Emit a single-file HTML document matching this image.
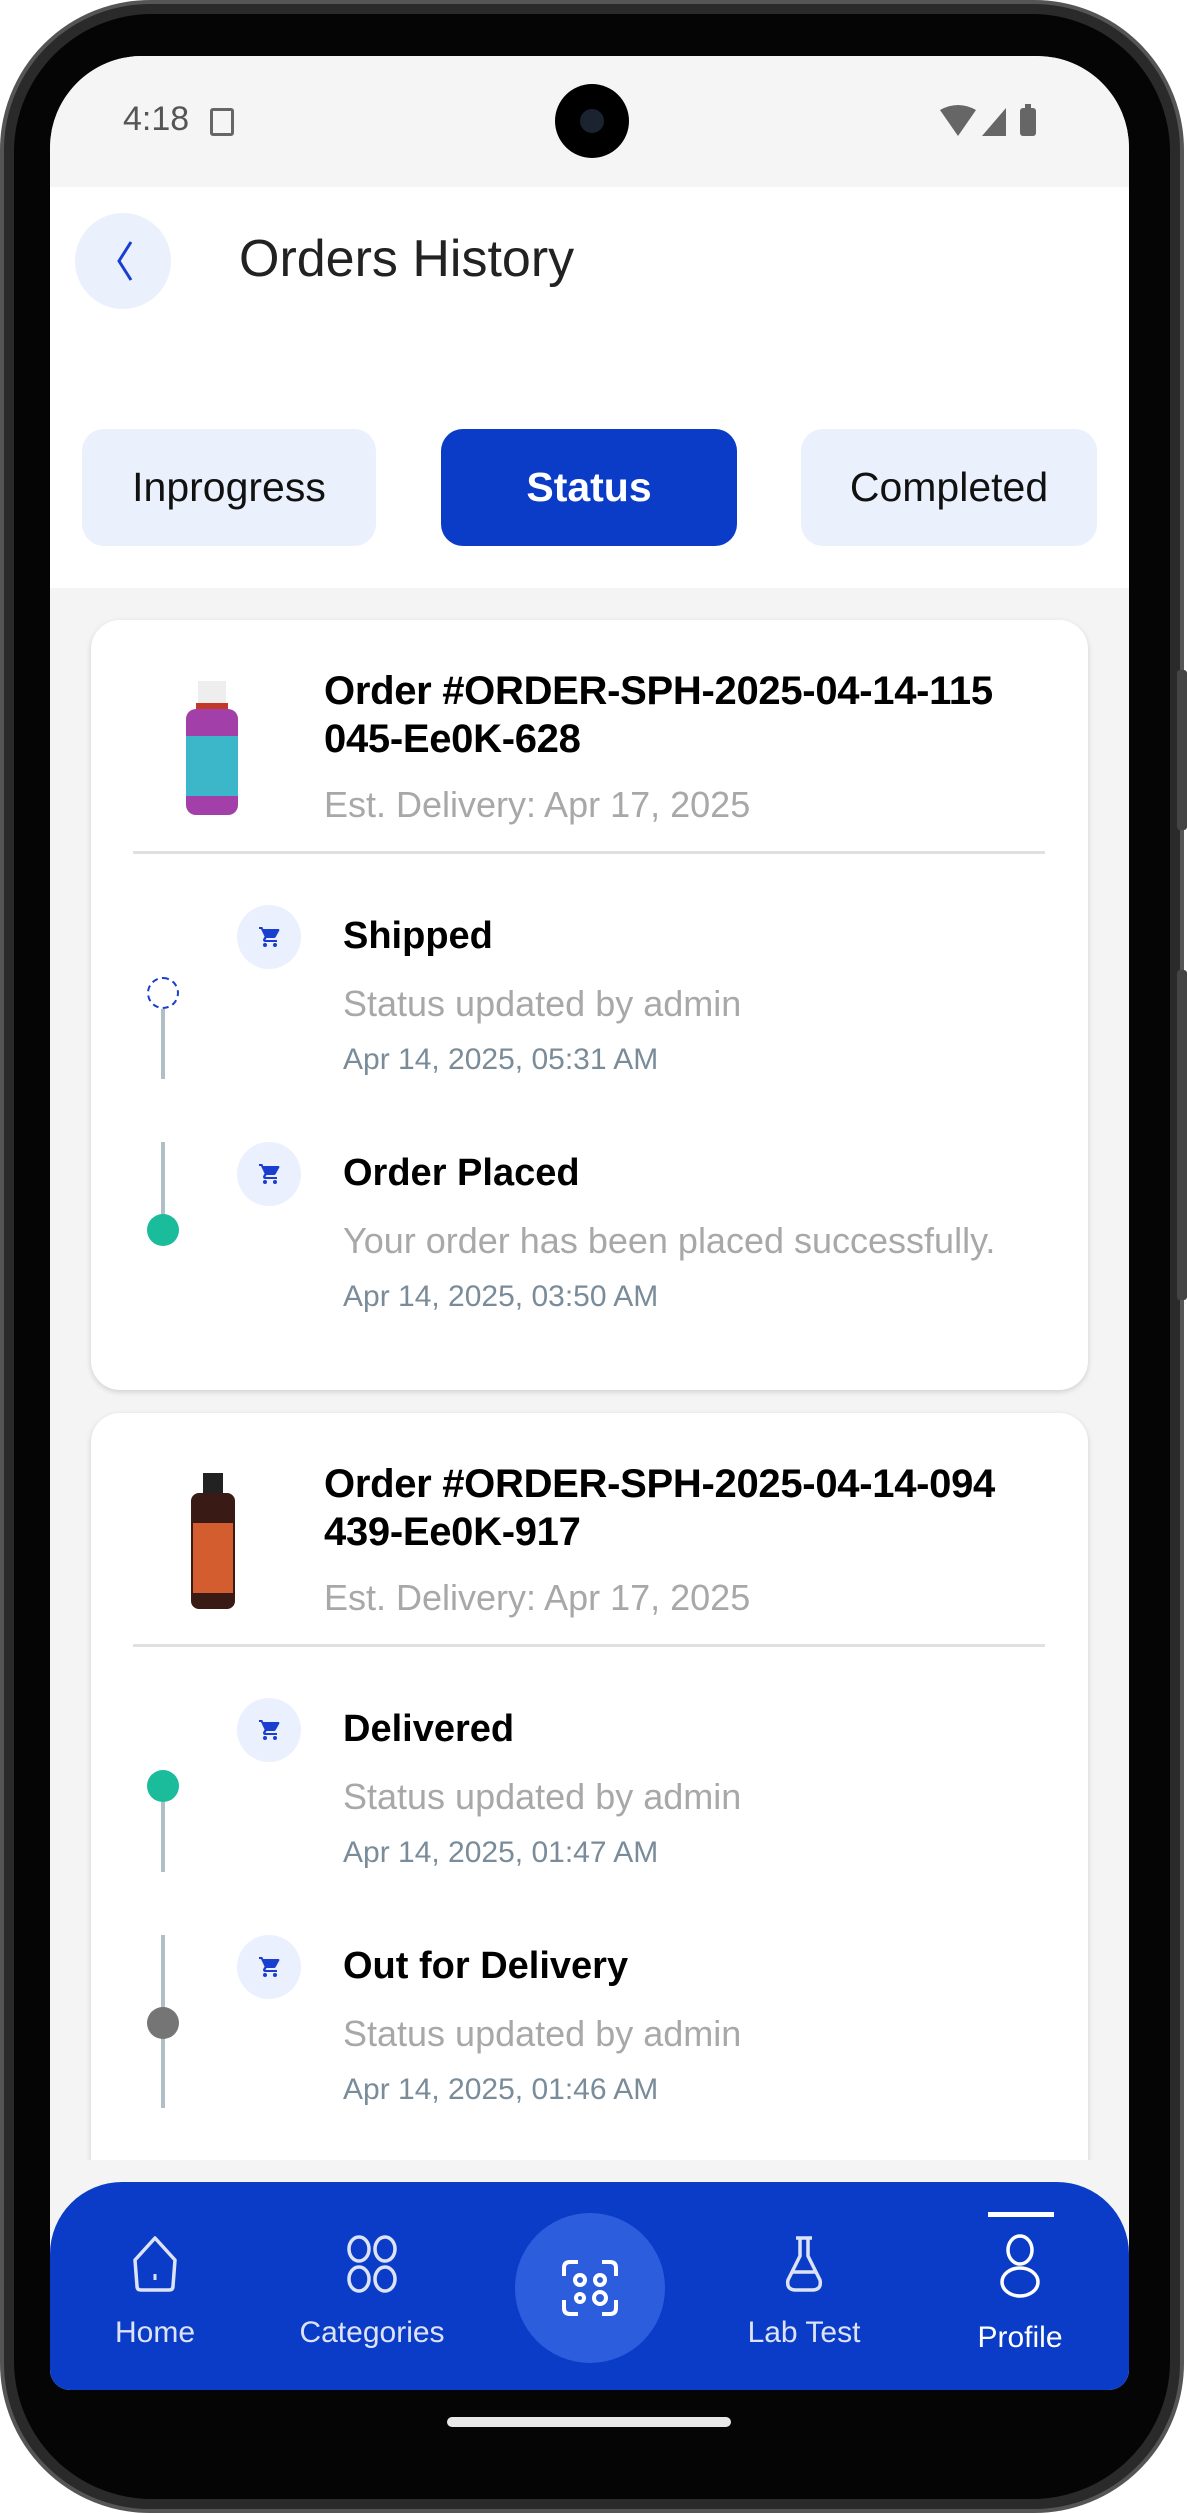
<!DOCTYPE html>
<html><head><meta charset="utf-8"><style>
*{margin:0;padding:0;box-sizing:border-box}
body{width:1187px;height:2513px;background:#fff;position:relative;overflow:hidden;font-family:"Liberation Sans",Arial,sans-serif}
.abs{position:absolute}
.body{left:0;top:0;width:1184px;height:2513px;border-radius:150px;background:#2a2a2a;border:4px solid #555}
.bezel{left:14px;top:14px;width:1156px;height:2485px;border-radius:138px;background:#050505}
.screen{left:50px;top:56px;width:1079px;height:2334px;border-radius:92px 92px 20px 20px;overflow:hidden;background:#f4f4f4}
.t{position:absolute;white-space:nowrap}
.card{position:absolute;left:41px;width:997px;background:#fff;border-radius:29px;box-shadow:0 2px 6px rgba(0,0,0,.15)}
.ot{left:233px;font-size:40px;font-weight:bold;color:#000;letter-spacing:-.3px}
.est{left:233px;font-size:36px;color:#a8a8a8}
.div{left:42px;width:912px;height:3px;background:#e0e0e0}
.ic{width:64px;height:64px;border-radius:50%;background:#eaf0fd;left:146px}
.ic svg{position:absolute;left:20px;top:20px}
.st{left:252px;font-size:38px;font-weight:bold;color:#000}
.sub{left:252px;font-size:36px;color:#a8a8a8}
.dt{left:252px;font-size:30px;color:#7a8c99}
.ln{left:70px;width:4px;background:#b0bec5}
.dot{left:56px;width:32px;height:32px;border-radius:50%}
.nav{left:0;top:2126px;width:1079px;height:208px;background:#0a3cc8;border-radius:72px 72px 0 0}
.nl{font-size:30px;color:#dde3f5;transform:translateX(-50%)}
</style></head><body>
<div class="abs body"></div>
<div class="abs" style="left:1177px;top:670px;width:10px;height:160px;background:#444;border-radius:3px"></div>
<div class="abs" style="left:1177px;top:970px;width:10px;height:330px;background:#444;border-radius:3px"></div>
<div class="abs bezel"></div>
<div class="abs screen">
  <div class="abs" style="left:0;top:0;width:1079px;height:131px;background:#f5f5f5"></div>
  <div class="t" style="left:73px;top:44px;font-size:34px;color:#555">4:18</div>
  <div class="abs" style="left:160px;top:52px;width:24px;height:28px;border:3px solid #666;border-radius:3px"></div>
  <div class="abs" style="left:505px;top:28px;width:74px;height:74px;border-radius:50%;background:#000"><div class="abs" style="left:25px;top:25px;width:24px;height:24px;border-radius:50%;background:#1b2230"></div></div>
  <svg class="abs" style="left:890px;top:48px" width="100" height="40"><path d="M0 6 Q18 -4 36 6 L18 32Z" fill="#666"/><path d="M42 32 L66 4 L66 32Z" fill="#666"/><rect x="80" y="4" width="16" height="28" rx="3" fill="#666"/><rect x="85" y="0" width="6" height="6" fill="#666"/></svg>
  <div class="abs" style="left:0;top:131px;width:1079px;height:401px;background:#fff"></div>
  <div class="abs" style="left:25px;top:157px;width:96px;height:96px;border-radius:50%;background:#ebf0fd"></div>
  <svg class="abs" style="left:55px;top:180px" width="40" height="50"><path d="M26 6 L14 25 L26 44" stroke="#1a3fd0" stroke-width="3" fill="none"/></svg>
  <div class="t" style="left:189px;top:173px;font-size:52px;color:#222">Orders History</div>
  <div class="abs" style="left:32px;top:373px;width:294px;height:117px;border-radius:22px;background:#ebf0fd"></div>
  <div class="t" style="left:32px;top:373px;width:294px;line-height:117px;text-align:center;font-size:41px;color:#111">Inprogress</div>
  <div class="abs" style="left:391px;top:373px;width:296px;height:117px;border-radius:22px;background:#0a3cc8"></div>
  <div class="t" style="left:391px;top:373px;width:296px;line-height:117px;text-align:center;font-size:41px;color:#fff;font-weight:bold">Status</div>
  <div class="abs" style="left:751px;top:373px;width:296px;height:117px;border-radius:22px;background:#ebf0fd"></div>
  <div class="t" style="left:751px;top:373px;width:296px;line-height:117px;text-align:center;font-size:41px;color:#111">Completed</div>

  <div class="card" style="top:564px;height:770px">
    <svg class="abs" style="left:85px;top:61px" width="72" height="136"><rect x="22" y="0" width="28" height="24" fill="#eee"/><rect x="20" y="22" width="32" height="6" fill="#c0392b"/><rect x="10" y="28" width="52" height="106" rx="10" fill="#a23fa8"/><rect x="10" y="55" width="52" height="60" fill="#3bb7c9"/></svg>
    <div class="t ot" style="top:49px">Order #ORDER-SPH-2025-04-14-115</div>
    <div class="t ot" style="top:97px">045-Ee0K-628</div>
    <div class="t est" style="top:164px">Est. Delivery: Apr 17, 2025</div>
    <div class="abs div" style="top:231px"></div>
    <div class="abs ic" style="top:285px"><svg width="26" height="24" viewBox="0 0 24 24"><path d="M7 18a2 2 0 1 0 0 4 2 2 0 0 0 0-4zM1 2v2h2l3.6 7.6-1.4 2.4C5.1 14.3 5 14.6 5 15c0 1.1.9 2 2 2h12v-2H7.4l1.1-2h7.5c.8 0 1.4-.4 1.7-1l3.6-6.5A1 1 0 0 0 20.4 4H5.2l-.9-2H1zm16 16a2 2 0 1 0 0 4 2 2 0 0 0 0-4z" fill="#1a3fd0"/></svg></div>
    <div class="t st" style="top:295px">Shipped</div>
    <div class="t sub" style="top:363px">Status updated by admin</div>
    <div class="t dt" style="top:423px">Apr 14, 2025, 05:31 AM</div>
    <div class="abs dot" style="top:357px;border:2px dashed #1a3fd0;background:#fff"></div>
    <div class="abs ln" style="top:389px;height:70px"></div>
    <div class="abs ic" style="top:522px"><svg width="26" height="24" viewBox="0 0 24 24"><path d="M7 18a2 2 0 1 0 0 4 2 2 0 0 0 0-4zM1 2v2h2l3.6 7.6-1.4 2.4C5.1 14.3 5 14.6 5 15c0 1.1.9 2 2 2h12v-2H7.4l1.1-2h7.5c.8 0 1.4-.4 1.7-1l3.6-6.5A1 1 0 0 0 20.4 4H5.2l-.9-2H1zm16 16a2 2 0 1 0 0 4 2 2 0 0 0 0-4z" fill="#1a3fd0"/></svg></div>
    <div class="t st" style="top:532px">Order Placed</div>
    <div class="t sub" style="top:600px">Your order has been placed successfully.</div>
    <div class="t dt" style="top:660px">Apr 14, 2025, 03:50 AM</div>
    <div class="abs ln" style="top:522px;height:80px"></div>
    <div class="abs dot" style="top:594px;background:#1abc9c"></div>
  </div>

  <div class="card" style="top:1357px;height:800px">
    <svg class="abs" style="left:90px;top:60px" width="64" height="136"><rect x="22" y="0" width="20" height="20" fill="#222"/><rect x="10" y="20" width="44" height="116" rx="8" fill="#3a1a14"/><rect x="12" y="50" width="40" height="70" fill="#d35d2e"/></svg>
    <div class="t ot" style="top:49px">Order #ORDER-SPH-2025-04-14-094</div>
    <div class="t ot" style="top:97px">439-Ee0K-917</div>
    <div class="t est" style="top:164px">Est. Delivery: Apr 17, 2025</div>
    <div class="abs div" style="top:231px"></div>
    <div class="abs ic" style="top:285px"><svg width="26" height="24" viewBox="0 0 24 24"><path d="M7 18a2 2 0 1 0 0 4 2 2 0 0 0 0-4zM1 2v2h2l3.6 7.6-1.4 2.4C5.1 14.3 5 14.6 5 15c0 1.1.9 2 2 2h12v-2H7.4l1.1-2h7.5c.8 0 1.4-.4 1.7-1l3.6-6.5A1 1 0 0 0 20.4 4H5.2l-.9-2H1zm16 16a2 2 0 1 0 0 4 2 2 0 0 0 0-4z" fill="#1a3fd0"/></svg></div>
    <div class="t st" style="top:295px">Delivered</div>
    <div class="t sub" style="top:363px">Status updated by admin</div>
    <div class="t dt" style="top:423px">Apr 14, 2025, 01:47 AM</div>
    <div class="abs dot" style="top:357px;background:#1abc9c"></div>
    <div class="abs ln" style="top:389px;height:70px"></div>
    <div class="abs ic" style="top:522px"><svg width="26" height="24" viewBox="0 0 24 24"><path d="M7 18a2 2 0 1 0 0 4 2 2 0 0 0 0-4zM1 2v2h2l3.6 7.6-1.4 2.4C5.1 14.3 5 14.6 5 15c0 1.1.9 2 2 2h12v-2H7.4l1.1-2h7.5c.8 0 1.4-.4 1.7-1l3.6-6.5A1 1 0 0 0 20.4 4H5.2l-.9-2H1zm16 16a2 2 0 1 0 0 4 2 2 0 0 0 0-4z" fill="#1a3fd0"/></svg></div>
    <div class="t st" style="top:532px">Out for Delivery</div>
    <div class="t sub" style="top:600px">Status updated by admin</div>
    <div class="t dt" style="top:660px">Apr 14, 2025, 01:46 AM</div>
    <div class="abs ln" style="top:522px;height:173px"></div>
    <div class="abs dot" style="top:594px;background:#757575"></div>
  </div>
  <div class="abs" style="left:0;top:2104px;width:1079px;height:30px;background:#f4f4f4"></div>

  <div class="abs nav">
    <svg class="abs" style="left:75px;top:52px" width="60" height="60"><path d="M30 4 L50 26 L48 52 Q48 56 44 56 L16 56 Q12 56 12 52 L10 26 Z" stroke="#dde3f5" stroke-width="3.5" fill="none" stroke-linejoin="round"/><path d="M30 40v6" stroke="#dde3f5" stroke-width="3"/></svg>
    <svg class="abs" style="left:292px;top:52px" width="60" height="60"><g stroke="#dde3f5" stroke-width="3.5" fill="none"><ellipse cx="17" cy="15" rx="10" ry="12"/><ellipse cx="43" cy="15" rx="10" ry="12"/><ellipse cx="17" cy="45" rx="10" ry="12"/><ellipse cx="43" cy="45" rx="10" ry="12"/></g></svg>
    <div class="abs" style="left:465px;top:31px;width:150px;height:150px;border-radius:50%;background:#2c5ddc"></div>
    <svg class="abs" style="left:510px;top:76px" width="60" height="60"><g stroke="#fff" stroke-width="4" fill="none"><path d="M4 18V10Q4 4 10 4H18M42 4H50Q56 4 56 10V18M56 42V50Q56 56 50 56H42M18 56H10Q4 56 4 50V42"/><circle cx="20" cy="22" r="5"/><circle cx="40" cy="22" r="5"/><circle cx="20" cy="40" r="4"/><circle cx="40" cy="40" r="6"/></g></svg>
    <svg class="abs" style="left:724px;top:52px" width="60" height="60"><path d="M22 4H38M26 4V22L14 46Q12 56 22 56H38Q48 56 46 46L34 22V4M18 38H42" stroke="#dde3f5" stroke-width="3.5" fill="none" stroke-linejoin="round"/></svg>
    <div class="abs" style="left:938px;top:30px;width:66px;height:5px;background:#fff"></div>
    <svg class="abs" style="left:940px;top:50px" width="60" height="70"><g stroke="#fff" stroke-width="3.5" fill="none"><ellipse cx="30" cy="18" rx="12" ry="14"/><ellipse cx="30" cy="50" rx="18" ry="14"/></g></svg>
    <div class="t nl" style="left:105px;top:134px">Home</div>
    <div class="t nl" style="left:322px;top:134px">Categories</div>
    <div class="t nl" style="left:754px;top:134px">Lab Test</div>
    <div class="t nl" style="left:970px;top:139px;color:#fff">Profile</div>
  </div>
</div>
<div class="abs" style="left:447px;top:2417px;width:284px;height:10px;border-radius:5px;background:#e8e8e8"></div>
</body></html>
